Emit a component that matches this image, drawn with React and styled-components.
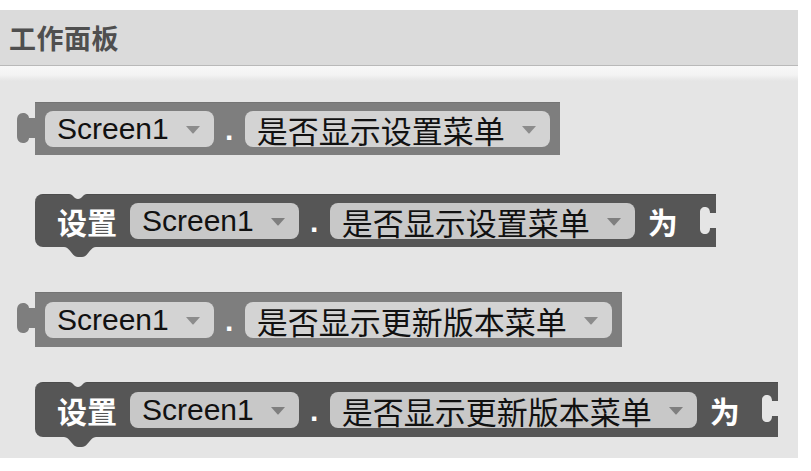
import React from 'react';
import styled, { createGlobalStyle } from 'styled-components';

const GlobalStyle = createGlobalStyle`
  body {
    margin: 0;
    background: #fff;
    font-family: "Liberation Sans", "Noto Sans CJK SC", sans-serif;
  }
`;

const VALUE = '#7e7e7e';
const STATEMENT = '#565656';
const CANVAS = '#e5e5e5';

const Page = styled.div`
  padding-top: 10px;
  width: 798px;
`;

const Header = styled.div`
  height: 55px;
  display: flex;
  align-items: center;
  padding-left: 9px;
  background: #dbdbdb;
  border-bottom: 1px solid #b9b9b9;
  color: #4f4f4f;
  font-family: "Noto Sans CJK SC", sans-serif;
  font-size: 27px;
  font-weight: 700;
  letter-spacing: 0.5px;
`;

const Workspace = styled.div`
  height: 392px;
  box-sizing: border-box;
  padding: 36px 0 0 35px;
  display: flex;
  flex-direction: column;
  align-items: flex-start;
  background: linear-gradient(to bottom, #f8f8f8 0px, #f3f3f3 9px, ${CANVAS} 15px, ${CANVAS});
`;

const Block = styled.div`
  position: relative;
  display: flex;
  align-items: center;
  height: ${p => p.$h}px;
  margin-top: ${p => p.$mt}px;
  background: ${p => (p.$statement ? STATEMENT : VALUE)};
  border-top: 1px solid ${p => (p.$statement ? '#4c4c4c' : '#747474')};
  box-sizing: border-box;
  border-radius: ${p => (p.$statement ? '8px 0 0 8px' : '0')};
  padding: ${p => (p.$statement ? '0 38px 0 22px' : '0 10px')};
`;

const Pill = styled.div`
  display: flex;
  align-items: center;
  height: 36px;
  padding: 0 13px 0 12px;
  border-radius: 8px;
  background: ${p => (p.$dark ? '#c8c8c8' : '#d3d3d3')};
  color: #111;
  white-space: nowrap;
`;

const FieldText = styled.span`
  font-size: ${p => (p.$cjk ? 31 : 30)}px;
  font-family: ${p => (p.$cjk ? '"Noto Sans CJK SC", sans-serif' : '"Liberation Sans", Arial, sans-serif')};
  line-height: 1;
`;

const Arrow = styled.svg`
  margin-left: 16px;
  flex-shrink: 0;
`;

const Dot = styled.span`
  width: 31px;
  text-align: center;
  color: #fff;
  font-size: 30px;
  font-weight: 700;
  line-height: 1;
  padding-top: 2px;
`;

const Keyword = styled.span`
  color: #fff;
  font-family: "Noto Sans CJK SC", sans-serif;
  font-size: 30px;
  font-weight: 700;
  line-height: 1;
  margin: ${p => p.$m};
  white-space: nowrap;
`;

const Tab = styled.svg`
  position: absolute;
  left: -18px;
  top: 10px;
`;

const Notch = styled.svg`
  position: absolute;
  left: 34px;
  top: -1px;
`;

const NextTab = styled.svg`
  position: absolute;
  left: 29px;
  top: 100%;
`;

const Socket = styled.svg`
  position: absolute;
  right: -1px;
  top: 12px;
`;

const DropArrow = ({ dark }) => (
  <Arrow width="16" height="9" viewBox="0 0 16 9">
    <path d="M1 1 L15 1 L8.6 8.2 Q8 8.8 7.4 8.2 Z" fill={dark ? '#7f7f7f' : '#8c8c8c'} />
  </Arrow>
);

const Dropdown = ({ text, cjk, dark }) => (
  <Pill $dark={dark}>
    <FieldText $cjk={cjk}>{text}</FieldText>
    <DropArrow dark={dark} />
  </Pill>
);

const Getter = ({ prop, h, mt }) => (
  <Block $h={h} $mt={mt}>
    <Tab width="19" height="30" viewBox="0 0 19 30">
      <path
        d="M19 5 L12 5 C12 2 9 0 6 0 C2 0 0 3 0 7 L0 23 C0 27 2 30 6 30 C9 30 12 28 12 25 L19 25 Z"
        fill={VALUE}
      />
    </Tab>
    <Dropdown text="Screen1" />
    <Dot>.</Dot>
    <Dropdown text={prop} cjk />
  </Block>
);

const Setter = ({ prop, h, mt }) => (
  <Block $statement $h={h} $mt={mt}>
    <Notch width="18" height="6" viewBox="0 0 18 6">
      <path d="M0 0 C4 0 5 5 9 5 C13 5 14 0 18 0 Z" fill={CANVAS} />
    </Notch>
    <Keyword $m="0 13px 0 0">设置</Keyword>
    <Dropdown text="Screen1" dark />
    <Dot>.</Dot>
    <Dropdown text={prop} cjk dark />
    <Keyword $m="0 0 0 13px">为</Keyword>
    <Socket width="17" height="27" viewBox="0 0 17 27">
      <path
        d="M17 6 L10 6 C10 2 8 0 5 0 C2 0 0 2 0 5 L0 22 C0 25 2 27 5 27 C8 27 10 25 10 21 L17 21 Z"
        fill={CANVAS}
      />
    </Socket>
    <NextTab width="32" height="10" viewBox="0 0 32 10">
      <path d="M0 0 C6 0 8 10 14 10 L18 10 C24 10 26 0 32 0 Z" fill={STATEMENT} />
    </NextTab>
  </Block>
);

export default function App() {
  return (
    <>
      <GlobalStyle />
      <Page>
        <Header>工作面板</Header>
        <Workspace>
          <Getter prop="是否显示设置菜单" h={53} mt={0} />
          <Setter prop="是否显示设置菜单" h={53} mt={39} />
          <Getter prop="是否显示更新版本菜单" h={55} mt={45} />
          <Setter prop="是否显示更新版本菜单" h={55} mt={35} />
        </Workspace>
      </Page>
    </>
  );
}
